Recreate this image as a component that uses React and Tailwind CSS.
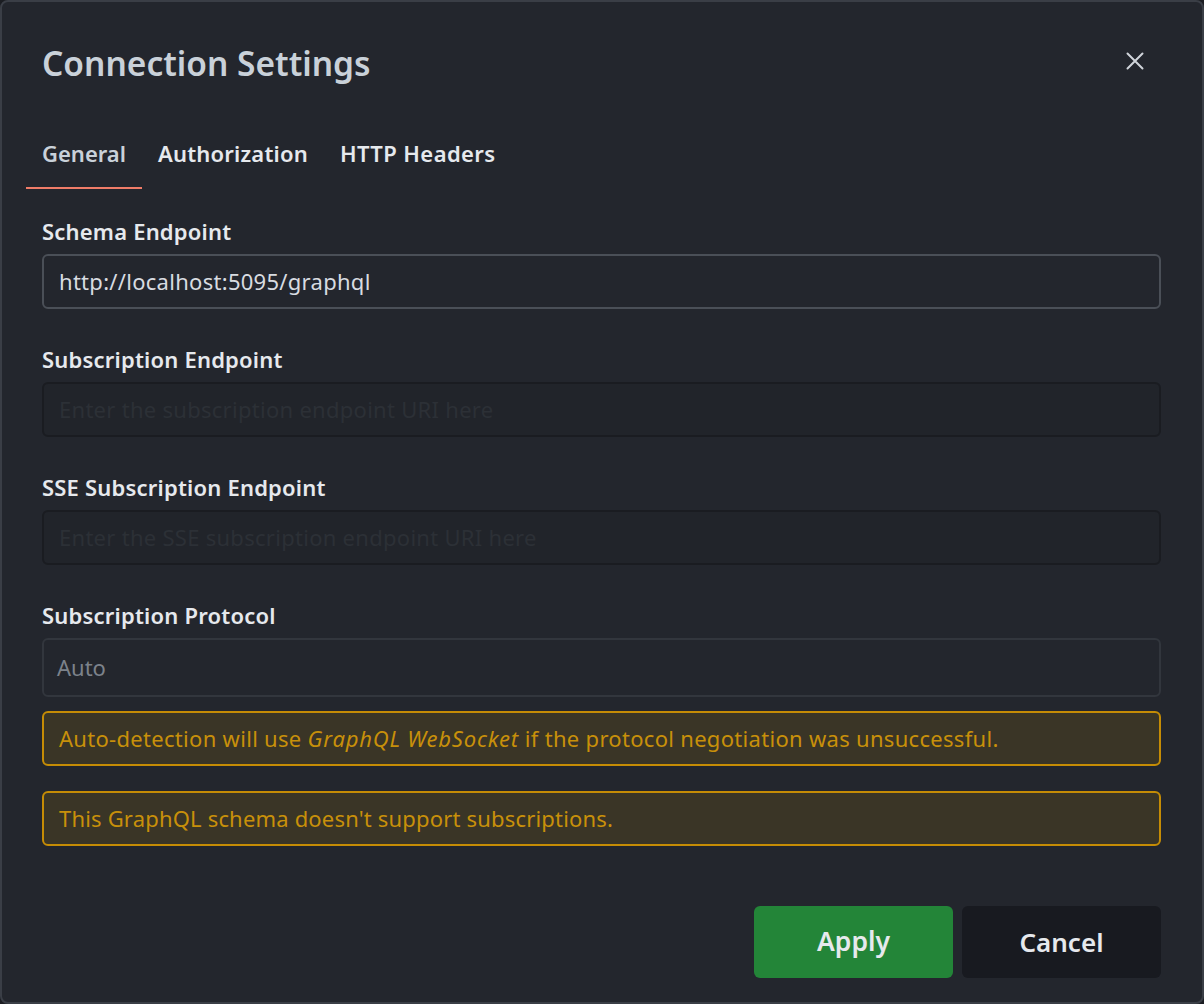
import React from "react";

export default function App() {
  const font = { fontFamily: '"Noto Sans", "Open Sans", sans-serif' };
  return (
    <div className="w-[1204px] h-[1004px] bg-[#1b1d22]" style={font}>
      <div className="w-full h-full rounded-[8px] border-2 border-[#3a3e46] bg-[#23262d] flex flex-col pl-[40px] pr-[41px]">
        <div className="flex items-center justify-between pt-[40px] h-[88px]">
          <h1 className="text-[33.5px] font-semibold text-[#c9d1d9] leading-none -mt-[4px]">Connection Settings</h1>
          <button className="text-[#d0d4da] mr-[17px] -mt-[10px]">
            <svg width="18" height="18" viewBox="0 0 18 18" fill="none" stroke="currentColor" strokeWidth="2" strokeLinecap="round">
              <path d="M1.5 1.5L16.5 16.5M16.5 1.5L1.5 16.5" />
            </svg>
          </button>
        </div>
        <div className="flex mt-[35px] -ml-[16px] h-[64px]">
          <div className="px-[16px] pt-[17px] border-b-2 border-[#f07c68] text-[22px] font-semibold text-[#c9d1d9] leading-none">General</div>
          <div className="px-[16px] pt-[17px] text-[22px] font-semibold text-[#e6e9ed] leading-none tracking-[0.2px]">Authorization</div>
          <div className="px-[16px] pt-[17px] text-[22px] font-semibold text-[#e6e9ed] leading-none tracking-[0.4px]">HTTP Headers</div>
        </div>
        <div className="flex flex-col mt-[30px]">
          <label className="text-[22px] font-semibold text-[#e6e9ed] leading-[30px] -mt-[3px] tracking-[0.2px]">Schema Endpoint</label>
          <div className="mt-[8px] h-[55px] rounded-[6px] border-2 border-[#4a4f57] flex items-center px-[15px] text-[22px] tracking-[0.28px] text-[#d8dce1]">http://localhost:5095/graphql</div>

          <label className="mt-[35px] text-[22px] font-semibold text-[#e6e9ed] leading-[30px] tracking-[0.2px]">Subscription Endpoint</label>
          <div className="mt-[8px] h-[55px] rounded-[6px] border-2 border-[#1a1c21] bg-[#21242a] flex items-center px-[15px] text-[22px] tracking-[0.28px] text-[#2c3036]">Enter the subscription endpoint URI here</div>

          <label className="mt-[35px] text-[22px] font-semibold text-[#e6e9ed] leading-[30px] tracking-[0.2px]">SSE Subscription Endpoint</label>
          <div className="mt-[8px] h-[55px] rounded-[6px] border-2 border-[#1a1c21] bg-[#21242a] flex items-center px-[15px] text-[22px] tracking-[0.28px] text-[#2c3036]">Enter the SSE subscription endpoint URI here</div>

          <label className="mt-[35px] text-[22px] font-semibold text-[#e6e9ed] leading-[30px] tracking-[0.2px]">Subscription Protocol</label>
          <div className="mt-[8px] h-[59px] rounded-[6px] border-2 border-[#32363d] flex items-center px-[13px] text-[22px] text-[#7c828b]">Auto</div>

          <div className="mt-[14px] h-[55px] rounded-[6px] border-2 border-[#c58c05] bg-[#3a3526] flex items-center px-[15px] text-[22px] tracking-[0.3px] text-[#c8900a]">
            <span>Auto-detection will use <i className="tracking-[0.8px]">GraphQL WebSocket</i> if the protocol negotiation was unsuccessful.</span>
          </div>
          <div className="mt-[25px] h-[55px] rounded-[6px] border-2 border-[#c58c05] bg-[#3a3526] flex items-center px-[15px] text-[22px] tracking-[0.18px] text-[#c8900a]">
            This GraphQL schema doesn't support subscriptions.
          </div>
        </div>
        <div className="flex justify-end gap-[9px] mt-[60px]">
          <button className="w-[199px] h-[72px] rounded-[6px] bg-[#238538] text-[#e6e9ed] text-[26.5px] font-semibold">Apply</button>
          <button className="w-[199px] h-[72px] rounded-[6px] bg-[#181a20] text-[#e6e9ed] text-[26px] font-semibold">Cancel</button>
        </div>
      </div>
    </div>
  );
}
